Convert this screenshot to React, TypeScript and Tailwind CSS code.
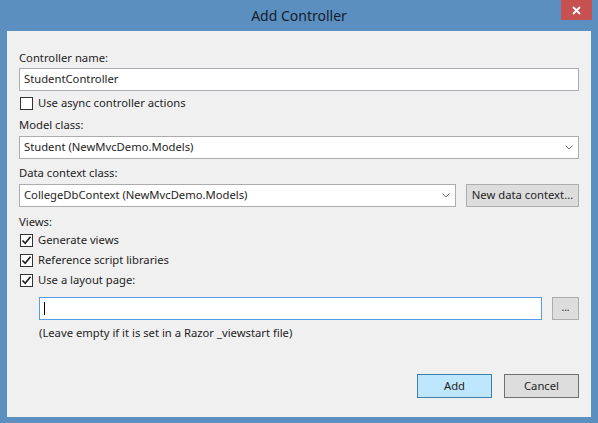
import React from 'react';

const FONT = "font-['Segoe_UI','Noto_Sans',sans-serif]";

function Check({ checked, label }: { checked: boolean; label: string }) {
  return (
    <div className="flex h-4 items-center">
      <span className="ml-px flex h-[13px] w-[13px] items-center justify-center border border-[#333333] bg-white">
        {checked && (
          <svg width="11" height="11" viewBox="0 0 11 11">
            <path d="M1.5 5.5 L4.2 8.3 L9.5 1.8" fill="none" stroke="#222" strokeWidth="1.7" />
          </svg>
        )}
      </span>
      <span className="ml-[5px]">{label}</span>
    </div>
  );
}

function Chevron() {
  return (
    <svg width="8" height="5" viewBox="0 0 8 5" className="mr-[5px]">
      <path d="M0.5 0.5 L4 4 L7.5 0.5" fill="none" stroke="#707070" strokeWidth="1" />
    </svg>
  );
}

function Combo({ value, className }: { value: string; className: string }) {
  return (
    <div className={`flex h-[23px] items-center justify-between border border-[#acacac] bg-white pl-[4px] ${className}`}>
      <span>{value}</span>
      <Chevron />
    </div>
  );
}

export default function App() {
  return (
    <div className={`flex h-[423px] w-[598px] flex-col bg-[#5b8fc0] text-[11.25px] text-[#1e1e1e] ${FONT}`}>
      <div className="relative flex h-[31px] items-center justify-center">
        <span className="text-[14px] text-[#15202c]">Add Controller</span>
        <div className="absolute right-[6px] top-0 flex h-[20px] w-[31px] items-center justify-center bg-[#c75050]">
          <svg width="9" height="9" viewBox="0 0 9 9">
            <path d="M1 1 L8 8 M8 1 L1 8" stroke="#fff" strokeWidth="1.8" />
          </svg>
        </div>
      </div>

      <div className="mx-[7px] mb-[6px] flex flex-1 flex-col bg-[#f0f0f0] px-3 pt-[19px] pb-[19px]">
        <div className="h-4 leading-4">Controller name:</div>
        <div className="mt-[2px] flex h-[23px] items-center border border-[#abadb3] bg-white pl-[4px]">StudentController</div>

        <div className="mt-[4px]">
          <Check checked={false} label="Use async controller actions" />
        </div>

        <div className="mt-[6px] h-4 leading-4">Model class:</div>
        <Combo className="mt-[3px]" value="Student (NewMvcDemo.Models)" />

        <div className="mt-[6px] h-4 leading-4">Data context class:</div>
        <div className="mt-[3px] flex gap-[10px]">
          <Combo className="flex-1" value="CollegeDbContext (NewMvcDemo.Models)" />
          <button className="h-[23px] w-[113px] border border-[#adadad] bg-[#dddddd]">New data context...</button>
        </div>

        <div className="mt-[7px] h-4 leading-4">Views:</div>
        <div className="mt-[2px] flex flex-col gap-1">
          <Check checked label="Generate views" />
          <Check checked label="Reference script libraries" />
          <Check checked label="Use a layout page:" />
        </div>

        <div className="ml-5 mt-[9px] flex gap-[10px]">
          <div className="flex h-[23px] flex-1 items-center border border-[#569de5] bg-white pl-[4px]">
            <span className="h-[13px] w-px bg-black" />
          </div>
          <button className="h-[23px] w-[27px] border border-[#adadad] bg-[#dddddd] pb-1 text-[10px] leading-none">...</button>
        </div>
        <div className="ml-5 mt-[5px] h-4 leading-4">(Leave empty if it is set in a Razor _viewstart file)</div>

        <div className="mt-auto flex justify-end gap-3">
          <button className="h-6 w-[75px] border border-[#3c7fb1] bg-[#bee6fd]">Add</button>
          <button className="h-6 w-[75px] border border-[#707070] bg-[#dddddd]">Cancel</button>
        </div>
      </div>
    </div>
  );
}
